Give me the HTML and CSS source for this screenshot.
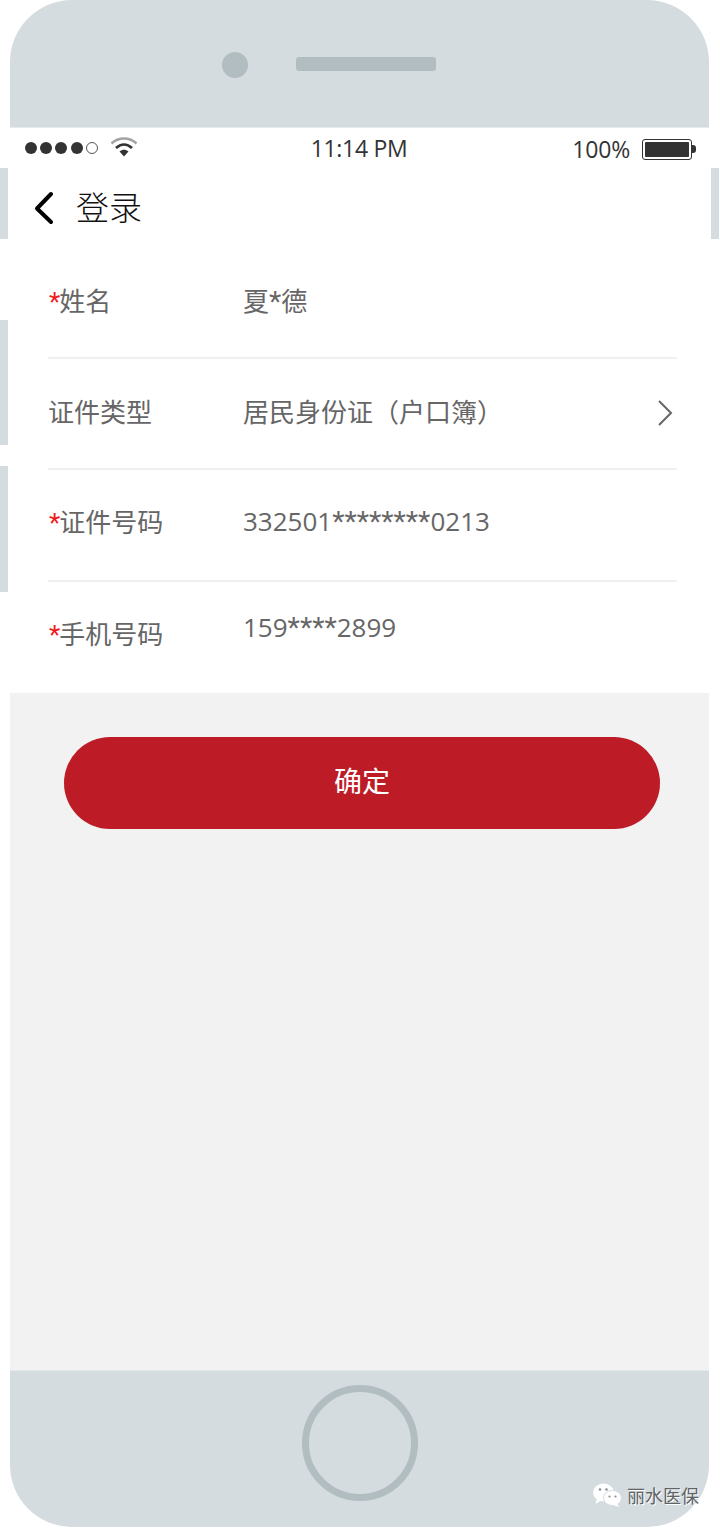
FILE: index.html
```html
<!DOCTYPE html>
<html lang="en">
<head>
  <meta charset="UTF-8" />
  <title>登录</title>
  <link rel="stylesheet" href="styles.css">
</head>
<body>
  <div class="side-btn side-left-1"></div>
  <div class="side-btn side-left-2"></div>
  <div class="side-btn side-left-3"></div>
  <div class="side-btn side-right-1"></div>

  <div class="phone">
    <div class="bezel-top">
      <div class="camera"></div>
      <div class="speaker"></div>
    </div>

    <div class="status-bar">
      <div class="status-left">
        <span class="dot"></span><span class="dot"></span><span class="dot"></span><span class="dot"></span><span class="dot dot-empty"></span>
        <svg class="wifi" width="28" height="22" viewBox="0 0 28 22">
          <path d="M1.5 7.5C8.5 .8 19.5 .8 26.5 7.5" fill="none" stroke="#a3a3a3" stroke-width="2.6"/>
          <path d="M6 12C11 7.4 17 7.4 22 12" fill="none" stroke="#333" stroke-width="2.6"/>
          <path d="M9.5 15.6C12.4 13 15.6 13 18.5 15.6L14 20.5Z" fill="#333"/>
        </svg>
      </div>
      <div class="status-time">11:14 PM</div>
      <div class="status-right">
        <span class="battery-text">100%</span>
        <span class="battery"><span class="battery-fill"></span></span>
        <span class="battery-tip"></span>
      </div>
    </div>

    <div class="nav-bar">
      <svg class="back" width="22" height="34" viewBox="0 0 22 34">
        <path d="M18 3L4 17.5L18 31" fill="none" stroke="#000" stroke-width="4" stroke-linecap="round" stroke-linejoin="round"/>
      </svg>
      <span class="nav-title">登录</span>
    </div>

    <div class="form">
      <div class="row">
        <div class="label"><span class="req">*</span>姓名</div>
        <div class="value">夏<span class="stars">*</span>德</div>
      </div>
      <div class="row row-mid">
        <div class="label">证件类型</div>
        <div class="value">居民身份证（户口簿）</div>
        <svg class="arrow" width="16" height="28" viewBox="0 0 16 28">
          <path d="M2 2L14 14L2 26" fill="none" stroke="#666" stroke-width="2"/>
        </svg>
      </div>
      <div class="row row-low">
        <div class="label"><span class="req">*</span>证件号码</div>
        <div class="value">332501<span class="stars">********</span>0213</div>
      </div>
      <div class="row row-last">
        <div class="label"><span class="req">*</span>手机号码</div>
        <div class="value value-up">159<span class="stars">****</span>2899</div>
      </div>
    </div>

    <div class="content">
      <button class="btn-ok">确定</button>
    </div>

    <div class="bezel-bottom">
      <div class="home-btn"></div>
    </div>
  </div>

  <div class="watermark">
    <svg width="31" height="26" viewBox="0 0 31 26">
      <ellipse cx="11.5" cy="10.5" rx="10.5" ry="9" fill="#fff"/>
      <path d="M5 16L3.5 22L10 18Z" fill="#fff"/>
      <ellipse cx="20.5" cy="16" rx="9" ry="7.6" fill="#fff" stroke="#d5dce0" stroke-width="1"/>
      <path d="M25 21L27 25L21 23Z" fill="#fff"/>
      <circle cx="8" cy="7.5" r="1.3" fill="#8a8f90"/>
      <circle cx="14.5" cy="7.5" r="1.3" fill="#8a8f90"/>
      <circle cx="17.5" cy="14.5" r="1.1" fill="#8a8f90"/>
      <circle cx="23.5" cy="14.5" r="1.1" fill="#8a8f90"/>
    </svg>
    <span class="watermark-text">丽水医保</span>
  </div>
</body>
</html>
```

FILE: styles.css
```css
* {
  margin: 0;
  padding: 0;
  box-sizing: border-box;
}

body {
  width: 720px;
  height: 1528px;
  position: relative;
  overflow: hidden;
  background: #fff;
  font-family: "Open Sans", "Noto Sans CJK SC", sans-serif;
}

.phone {
  width: 699px;
  height: 1527px;
  margin-left: 10px;
  border-radius: 62px;
  overflow: hidden;
  display: flex;
  flex-direction: column;
  background: #fff;
}

/* side buttons sit outside the phone body */
.side-btn {
  position: absolute;
  width: 8px;
  background: #d5dce0;
}

.side-left-1 { left: 0; top: 168px; height: 71px; }
.side-left-2 { left: 0; top: 320px; height: 125px; }
.side-left-3 { left: 0; top: 466px; height: 126px; }
.side-right-1 { left: 711px; top: 168px; height: 71px; }

.bezel-top {
  height: 128px;
  flex-shrink: 0;
  background: #d5dce0;
  border-bottom: 1px solid #e6eaec;
  display: flex;
  align-items: flex-start;
  padding: 52px 0 0 212px;
}

.camera {
  width: 26px;
  height: 26px;
  border-radius: 50%;
  background: #b1bdc1;
}

.speaker {
  width: 140px;
  height: 14px;
  margin: 5px 0 0 48px;
  border-radius: 3px;
  background: #b1bdc1;
}

.status-bar {
  height: 40px;
  flex-shrink: 0;
  display: grid;
  grid-template-columns: 1fr auto 1fr;
  align-items: center;
  padding: 0 13px 0 15px;
  color: #333;
}

.status-left {
  display: flex;
  align-items: center;
}

.dot {
  width: 12px;
  height: 12px;
  margin-right: 3.2px;
  border-radius: 50%;
  background: #333;
}

.dot-empty {
  background: #fff;
  border: 1px solid #555;
}

.wifi {
  margin: -3px 0 0 9px;
}

.status-time {
  font-size: 23px;
  letter-spacing: -0.3px;
  margin-left: -3px;
}

.status-right {
  display: flex;
  align-items: center;
  justify-content: flex-end;
  padding-top: 2px;
}

.battery-text {
  font-size: 23px;
  letter-spacing: -0.2px;
  margin-right: 12px;
}

.battery {
  width: 50px;
  height: 21px;
  padding: 2px;
  border: 1px solid #333;
  border-radius: 3px;
  display: flex;
}

.battery-fill {
  flex: 1;
  background: #333;
  border-radius: 1px;
}

.battery-tip {
  width: 4px;
  height: 8px;
  background: #333;
  border-radius: 0 3px 3px 0;
}

.nav-bar {
  height: 79px;
  flex-shrink: 0;
  display: flex;
  align-items: center;
  padding: 0 0 3px 23px;
}

.back {
  margin-top: 4px;
}

.nav-title {
  margin-left: 21px;
  font-size: 33px;
  color: #111;
  font-weight: 300;
  font-family: "Noto Sans CJK SC", sans-serif;
}

.form {
  flex-shrink: 0;
  padding: 0 32px 0 38px;
}

.row {
  height: 111.5px;
  display: flex;
  align-items: center;
  border-bottom: 2px solid #f0f0f0;
  padding-bottom: 3px;
  color: #666;
  font-size: 26px;
}

.row-mid {
  padding-bottom: 5px;
}

.row-low {
  padding-bottom: 7px;
}

.row-last {
  border-bottom: none;
  padding-bottom: 9px;
}

.label {
  width: 194px;
  flex-shrink: 0;
}

.req {
  color: #f01c1c;
  font-family: Roboto, sans-serif;
  margin: 0 -1px 0 1px;
}

.stars {
  font-family: Roboto, sans-serif;
  font-size: 28.5px;
}

.value {
  flex: 1;
  padding-left: 1px;
}

.value-up {
  margin-top: -12px;
}

.arrow {
  margin: 4px 4px 0 0;
}

.content {
  flex: 1;
  background: #f2f2f2;
  padding: 44px 49px 0 54px;
}

.btn-ok {
  display: block;
  width: 596px;
  height: 92px;
  border: none;
  border-radius: 46px;
  background: #bd1c27;
  color: #fff;
  font-size: 28px;
  font-family: "Noto Sans CJK SC", sans-serif;
  padding-bottom: 6px;
}

.bezel-bottom {
  height: 157px;
  flex-shrink: 0;
  background: #d5dce0;
  border-top: 1px solid #e4e8ea;
  display: flex;
  justify-content: center;
  padding: 14px 9px 0 10px;
}

.home-btn {
  width: 116px;
  height: 116px;
  border-radius: 50%;
  border: 7px solid #b1bdc1;
}

.watermark {
  position: absolute;
  left: 592px;
  top: 1482px;
  display: flex;
  align-items: center;
  gap: 4px;
}

.watermark-text {
  font-size: 18px;
  color: #5e6366;
  font-family: "Noto Sans CJK SC", sans-serif;
  text-shadow: 1px 1px 0 #fff;
}
```
